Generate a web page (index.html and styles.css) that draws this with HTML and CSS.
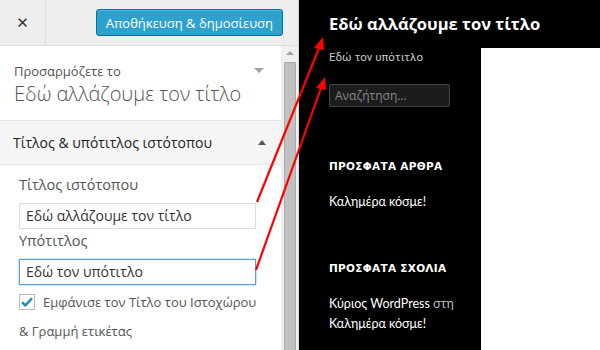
FILE: index.html
```html
<!DOCTYPE html>
<html lang="el">
<head>
<meta charset="utf-8">
<link rel="stylesheet" href="styles.css">
</head>
<body>
<div class="sidebar">
  <div class="header">
    <div class="close">✕</div>
    <div class="header-actions"><button class="save">Αποθήκευση &amp; δημοσίευση</button></div>
  </div>
  <div class="main">
    <div class="panel">
      <div class="info">
        <div class="info-text">
          <div class="info-small">Προσαρμόζετε το</div>
          <div class="info-big">Εδώ αλλάζουμε τον τίτλο</div>
        </div>
        <span class="tri-down"></span>
      </div>
      <div class="section-head">
        <span>Τίτλος &amp; υπότιτλος ιστότοπου</span>
        <span class="tri-up"></span>
      </div>
      <div class="section-body">
        <div class="label">Τίτλος ιστότοπου</div>
        <div class="input">Εδώ αλλάζουμε τον τίτλο</div>
        <div class="label">Υπότιτλος</div>
        <div class="input focus">Εδώ τον υπότιτλο</div>
        <div class="check-row">
          <span class="checkbox"><svg width="12" height="10" viewBox="0 0 12 10"><path d="M1 5.2 L4.3 8.4 L11 1.4" fill="none" stroke="#1e8cbe" stroke-width="2.4"/></svg></span>
          <span>Εμφάνισε τον Τίτλο του Ιστοχώρου</span>
        </div>
        <div class="check-more">&amp; Γραμμή ετικέτας</div>
      </div>
    </div>
    <div class="scrollbar">
      <span class="sb-up"></span>
      <div class="sb-thumb"></div>
    </div>
  </div>
</div>
<div class="preview">
  <div class="site-title">Εδώ αλλάζουμε τον τίτλο</div>
  <div class="site-row">
    <div class="site-side">
      <div class="site-desc">Εδώ τον υπότιτλο</div>
      <div class="search">Αναζήτηση…</div>
      <div class="widget-title first">ΠΡΟΣΦΑΤΑ ΑΡΘΡΑ</div>
      <div class="widget-link">Καλημέρα κόσμε!</div>
      <div class="widget-title second">ΠΡΟΣΦΑΤΑ ΣΧΟΛΙΑ</div>
      <div class="widget-link">Κύριος WordPress <span class="muted">στη</span></div>
      <div class="widget-link line2">Καλημέρα κόσμε!</div>
    </div>
    <div class="site-content"></div>
  </div>
</div>
<svg class="arrows" width="600" height="350" viewBox="0 0 600 350">
  <line x1="257" y1="202" x2="319" y2="48" stroke="#ff0000" stroke-width="2.2"/>
  <polygon points="323,37 314,48 324,50" fill="#ff0000"/>
  <line x1="256" y1="270" x2="321" y2="88" stroke="#ff0000" stroke-width="2.2"/>
  <polygon points="325,77 316,88 326,90" fill="#ff0000"/>
</svg>
</body>
</html>
```
FILE: styles.css
```css
html, body {
  margin: 0;
  padding: 0;
}
body {
  width: 600px;
  height: 350px;
  overflow: hidden;
  display: flex;
  position: relative;
  font-family: "Open Sans", "Liberation Sans", sans-serif;
  background: #000;
}
.sidebar {
  width: 298px;
  flex: none;
  background: #eee;
  border-right: 1px solid #d4d4d4;
  display: flex;
  flex-direction: column;
}
.header {
  height: 45px;
  border-bottom: 1px solid #ddd;
  display: flex;
  align-items: center;
  flex: none;
}
.close {
  width: 45px;
  height: 45px;
  border-right: 1px solid #ddd;
  display: flex;
  align-items: center;
  justify-content: center;
  font-size: 15px;
  font-weight: bold;
  color: #333;
  font-family: "DejaVu Sans", sans-serif;
}
.header-actions {
  flex: 1;
  display: flex;
  justify-content: flex-end;
  padding-right: 15px;
}
.save {
  height: 27px;
  padding: 0 9px;
  background: #2ea2cc;
  border: 1px solid #0074a2;
  border-radius: 3px;
  color: #fff;
  font-family: "Open Sans", sans-serif;
  font-size: 13px;
  box-shadow: inset 0 1px 0 rgba(120,200,230,0.5);
}
.main {
  flex: 1;
  display: flex;
  min-height: 0;
}
.panel {
  width: 281px;
  background: #fff;
  flex: none;
}
.info {
  display: flex;
  justify-content: space-between;
  padding: 16px 17px 0 14px;
  height: 74px;
  box-sizing: border-box;
  color: #555;
}
.info-small {
  font-size: 13px;
  line-height: 18px;
}
.info-big {
  font-size: 20px;
  font-weight: 300;
  line-height: 28px;
}
.tri-down {
  margin-top: 6px;
  width: 0;
  height: 0;
  border-left: 5px solid transparent;
  border-right: 5px solid transparent;
  border-top: 5px solid #a0a5aa;
}
.section-head {
  height: 43px;
  background: #f5f5f5;
  border-top: 1px solid #e5e5e5;
  border-bottom: 1px solid #e5e5e5;
  display: flex;
  align-items: center;
  justify-content: space-between;
  padding: 0 15px 0 13px;
  font-size: 14px;
  color: #222;
}
.tri-up {
  width: 0;
  height: 0;
  border-left: 4px solid transparent;
  border-right: 4px solid transparent;
  border-bottom: 5px solid #555;
}
.section-body {
  padding: 10px 0 0 19px;
  color: #555;
}
.label {
  font-size: 14.5px;
  line-height: 20px;
  margin-bottom: 8px;
}
.input {
  width: 223px;
  height: 24px;
  border: 1px solid #ddd;
  padding: 0 6px;
  font-size: 14px;
  line-height: 24px;
  color: #333;
  box-shadow: inset 0 1px 2px rgba(0,0,0,0.05);
  margin-bottom: 2px;
}
.input.focus {
  border-color: #5b9dd9;
  box-shadow: 0 0 2px rgba(30,140,190,0.6);
}
.check-row {
  display: flex;
  align-items: center;
  gap: 8px;
  font-size: 13px;
  margin-top: 8px;
}
.checkbox {
  width: 14px;
  height: 14px;
  border: 1px solid #bbb;
  display: flex;
  align-items: center;
  justify-content: center;
  background: #fff;
}
.check-more {
  font-size: 13px;
  line-height: 18px;
  margin-top: 11px;
}
.scrollbar {
  width: 14px;
  margin-left: 2px;
  background: #f0f0f0;
  display: flex;
  flex-direction: column;
  align-items: center;
}
.sb-up {
  margin-top: 5px;
  width: 0;
  height: 0;
  border-left: 4px solid transparent;
  border-right: 4px solid transparent;
  border-bottom: 4px solid #a3a3a3;
}
.sb-thumb {
  margin-top: 7px;
  width: 12px;
  flex: 1;
  background: #c1c1c1;
  border: 1px solid #aaa;
  border-bottom: none;
  box-sizing: border-box;
}
.preview {
  flex: 1;
  background: #000;
  display: flex;
  flex-direction: column;
  color: #fff;
}
.site-title {
  height: 48px;
  padding: 13px 0 0 30px;
  box-sizing: border-box;
  font-family: "Open Sans", sans-serif;
  font-weight: 700;
  font-size: 16.5px;
  line-height: 22px;
  white-space: nowrap;
}
.site-row {
  flex: 1;
  display: flex;
}
.site-side {
  width: 152px;
  padding-left: 30px;
  flex: none;
}
.site-content {
  flex: 1;
  background: #fff;
}
.site-desc {
  font-family: Roboto, sans-serif;
  font-size: 11.5px;
  color: #c8c8c8;
  line-height: 16px;
  margin-top: 1px;
}
.search {
  margin-top: 19px;
  width: 121px;
  height: 23px;
  box-sizing: border-box;
  background: #1c1c1c;
  border: 1px solid #444;
  border-radius: 2px;
  color: #8a8a8a;
  font-size: 12px;
  line-height: 21px;
  padding-left: 5px;
}
.widget-title {
  font-family: "DejaVu Sans", sans-serif;
  font-weight: bold;
  font-size: 10.5px;
  line-height: 14px;
  letter-spacing: 0.3px;
  white-space: nowrap;
}
.widget-title.first {
  margin-top: 52px;
}
.widget-title.second {
  margin-top: 49px;
}
.widget-link {
  font-family: Lato, sans-serif;
  font-size: 12.5px;
  line-height: 20px;
  margin-top: 19px;
}
.widget-link.line2 {
  margin-top: 0;
}
.muted {
  color: #bbb;
}
.arrows {
  position: absolute;
  left: 0;
  top: 0;
  pointer-events: none;
}
```
